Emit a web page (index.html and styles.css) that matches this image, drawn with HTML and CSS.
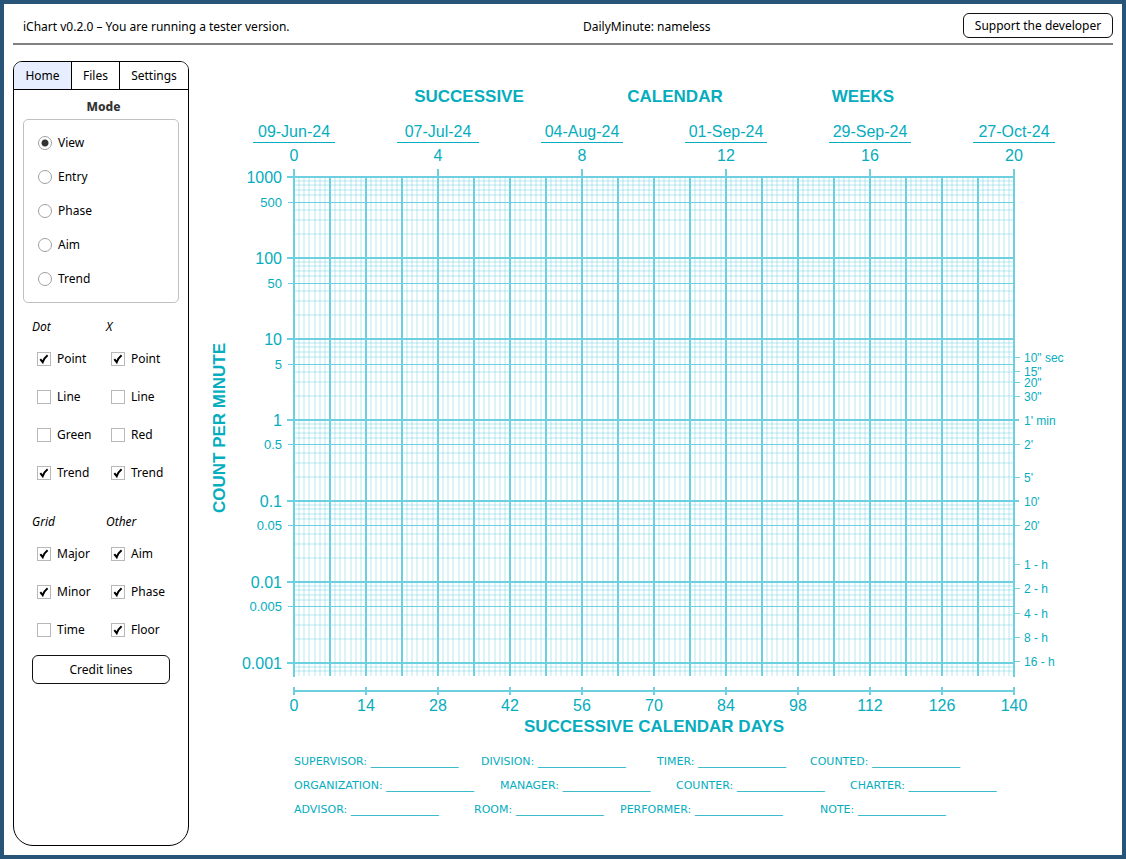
FILE: index.html
```
<!DOCTYPE html>
<html lang="en">
<head>
<meta charset="utf-8">
<title>iChart</title>
<link rel="stylesheet" href="styles.css">
</head>
<body>
<div class="app">
  <header class="topbar">
    <span class="version">iChart v0.2.0 – You are running a tester version.</span>
    <span class="chart-name">DailyMinute: nameless</span>
    <div class="topbar-end"><button type="button" class="btn btn-support">Support the developer</button></div>
  </header>
  <main class="main">
    <aside class="sidebar">
      <nav class="tabs">
        <button type="button" class="tab tab-home tab-active">Home</button>
        <button type="button" class="tab tab-files">Files</button>
        <button type="button" class="tab tab-settings">Settings</button>
      </nav>
      <div class="panel">
        <h2 class="mode-title">Mode</h2>
        <div class="modes" role="radiogroup" aria-label="Mode">
          <label class="option"><input type="radio" name="mode" checked>View</label>
          <label class="option"><input type="radio" name="mode">Entry</label>
          <label class="option"><input type="radio" name="mode">Phase</label>
          <label class="option"><input type="radio" name="mode">Aim</label>
          <label class="option"><input type="radio" name="mode">Trend</label>
        </div>
        <div class="groups">
          <section class="group">
            <h3 class="group-title">Dot</h3>
            <label class="check"><input type="checkbox" checked>Point</label>
            <label class="check"><input type="checkbox">Line</label>
            <label class="check"><input type="checkbox">Green</label>
            <label class="check"><input type="checkbox" checked>Trend</label>
          </section>
          <section class="group">
            <h3 class="group-title">X</h3>
            <label class="check"><input type="checkbox" checked>Point</label>
            <label class="check"><input type="checkbox">Line</label>
            <label class="check"><input type="checkbox">Red</label>
            <label class="check"><input type="checkbox" checked>Trend</label>
          </section>
          <section class="group">
            <h3 class="group-title">Grid</h3>
            <label class="check"><input type="checkbox" checked>Major</label>
            <label class="check"><input type="checkbox" checked>Minor</label>
            <label class="check"><input type="checkbox">Time</label>
          </section>
          <section class="group">
            <h3 class="group-title">Other</h3>
            <label class="check"><input type="checkbox" checked>Aim</label>
            <label class="check"><input type="checkbox" checked>Phase</label>
            <label class="check"><input type="checkbox" checked>Floor</label>
          </section>
        </div>
        <button type="button" class="btn btn-credit">Credit lines</button>
      </div>
    </aside>
    <svg class="chart" id="chart" viewBox="-105 -116 924 785" role="img" aria-label="Daily per minute chart"></svg>
  </main>
</div>
<script src="chart.js"></script>
</body>
</html>
```
FILE: styles.css
```
* { box-sizing: border-box; }
body {
  margin: 0;
  background: #fff;
  color: #000;
  font: 12px/16px "Noto Sans", sans-serif;
}
button, input { font: inherit; color: inherit; margin: 0; }
.app {
  min-height: 100vh;
  border: 4px solid #285577;
  padding: 9px;
  display: flex;
  flex-direction: column;
}
.topbar {
  display: grid;
  grid-template-columns: 570px 1fr auto;
  align-items: start;
  border-bottom: 2px solid #808080;
  height: 32px;
}
.version { padding: 6px 0 0 10px; }
.chart-name { padding-top: 6px; }
.btn {
  background: #fff;
  border: 1px solid #111;
  border-radius: 6px;
  padding: 0 8px;
  text-align: center;
  white-space: nowrap;
}
.btn-support { height: 25px; width: 150px; display: block; }
.main { flex: 1; display: flex; align-items: stretch; margin-top: 16px; }
.sidebar {
  flex: 0 0 176px;
  border: 1px solid #000;
  border-radius: 9px 9px 20px 20px;
  overflow: hidden;
}
.tabs { display: flex; border-bottom: 1px solid #000; }
.tab {
  height: 27px;
  border: 0;
  border-right: 1px solid #000;
  background: #fff;
  padding: 0 11px;
}
.tab-home { width: 58px; }
.tab:last-child { border-right: 0; flex: 1; padding: 0; }
.tab-active { background: #e6eeff; }
.panel { padding: 9px 9px 0; }
.mode-title { margin: 0 0 4px 5px; font-size: 12px; line-height: 16px; font-weight: 800; color: #333; text-align: center; }
.modes { border: 1px solid #c0c0c0; border-radius: 5px; padding: 6px 14px; }
.option { display: flex; align-items: center; gap: 6px; height: 34px; }
.check { display: flex; align-items: center; gap: 6px; height: 38px; padding-left: 5px; }
.groups { display: grid; grid-template-columns: 74px 1fr; row-gap: 22px; padding: 16px 0 0 9px; }
.group-title { margin: 0 0 5px; font-size: 12px; line-height: 16px; font-weight: 400; font-style: italic; }
input[type="radio"] {
  appearance: none;
  width: 14px;
  height: 14px;
  border: 1px solid #a0a0a0;
  border-radius: 50%;
  background: #fff;
}
input[type="radio"]:checked { background: radial-gradient(circle, #333 3px, #fff 4px); }
input[type="checkbox"] {
  appearance: none;
  width: 14px;
  height: 14px;
  border: 1px solid #b8b8b8;
  background: #fff;
}
input[type="checkbox"]:checked {
  background: url("data:image/svg+xml,%3Csvg xmlns='http://www.w3.org/2000/svg' viewBox='0 0 12 12'%3E%3Cpath d='M2.3 6.2L4.7 9.2Q6.2 5 9.6 2.3' fill='none' stroke='%23000' stroke-width='2'/%3E%3C/svg%3E") center / 12px 12px no-repeat;
}
.btn-credit { display: block; width: 138px; height: 29px; margin: 6px 0 0 9px; }
.chart { flex: 1; min-width: 0; height: auto; align-self: flex-start; }
.chart text { font-family: "Liberation Sans", Arial, sans-serif; fill: #05adbe; }
.chart .title { font-size: 17px; font-weight: 700; }
.chart .major-label { font-size: 16px; }
.chart .minor-label { font-size: 13px; }
.chart .time-label { font-size: 12px; }
.chart .credit { font-family: "DejaVu Sans", sans-serif; font-size: 11px; }
.chart line { stroke: #6dd0e0; }
.chart .major { stroke-width: 2; }
.chart .five { stroke-width: 1; }
.chart .minor { stroke-width: 2; stroke: #6dd0e0; stroke-opacity: .24; }
.chart .rule { stroke: #05adbe; stroke-width: 1; }
```
FILE: chart.js
```
const NS = "http://www.w3.org/2000/svg";
const chart = document.getElementById("chart");
const WIDTH = 720;
const FLOOR = 499;
const DECADE = 81;

function line(x1, y1, x2, y2, cls) {
  const el = document.createElementNS(NS, "line");
  Object.entries({ x1, y1, x2, y2, class: cls }).forEach(([k, v]) => el.setAttribute(k, v));
  chart.append(el);
}
function text(x, y, str, cls, anchor = "start", rotate = 0) {
  const el = document.createElementNS(NS, "text");
  el.setAttribute("x", x);
  el.setAttribute("y", y);
  el.setAttribute("class", cls);
  el.setAttribute("text-anchor", anchor);
  if (rotate) el.setAttribute("transform", `rotate(${rotate} ${x} ${y})`);
  el.textContent = str;
  chart.append(el);
}

// Minor grid: one line per day, and one per log step
for (let d = 1; d < 140; d++) {
  if (d % 7) line(Math.round(d * WIDTH / 140), 0, Math.round(d * WIDTH / 140), FLOOR, "minor");
}
for (let k = 0; k < 7; k++) {
  for (const n of [2, 3, 4, 6, 7, 8, 9]) {
    const y = Math.round(k * DECADE + 0.3 - DECADE * Math.log10(n / 10));
    if (y < FLOOR) line(0, y, WIDTH, y, "minor");
  }
}

// Count axis
["500", "50", "5", "0.5", "0.05", "0.005"].forEach((s, k) => {
  const y = [25, 106, 187, 267, 348, 429][k] + 0.5;
  line(-6, y, WIDTH, y, "five");
  text(-12, y + 4, s, "minor-label", "end");
});
["1000", "100", "10", "1", "0.1", "0.01", "0.001"].forEach((s, k) => {
  line(-7, k * DECADE, WIDTH, k * DECADE, "major");
  text(-12, k * DECADE + 6, s, "major-label", "end");
});

// Week lines and the dates above them
for (let w = 0; w <= 20; w++) {
  const edge = w === 0 || w === 20;
  line(w * 36, w % 4 ? 0 : -8, w * 36, edge ? FLOOR + 1 : FLOOR, "major");
}
["09-Jun-24", "07-Jul-24", "04-Aug-24", "01-Sep-24", "29-Sep-24", "27-Oct-24"].forEach((s, i) => {
  text(i * 144, -40, s, "major-label", "middle");
  line(i * 144 - 41, -34.5, i * 144 + 41, -34.5, "rule");
  text(i * 144, -16, String(i * 4), "major-label", "middle");
});

// Day axis
line(0, 514, WIDTH, 514, "major");
for (let i = 0; i <= 10; i++) {
  line(i * 72, 510, i * 72, 518, "major");
  text(i * 72, 534, String(i * 14), "major-label", "middle");
}

// Counting time axis
[
  ["10\" sec", 180], ["15\"", 194], ["20\"", 205], ["30\"", 219], ["1' min", 243, true],
  ["2'", 267], ["5'", 300], ["10'", 324, true], ["20'", 348], ["1 - h", 387],
  ["2 - h", 411], ["4 - h", 436], ["8 - h", 460], ["16 - h", 484]
].forEach(([s, y, major]) => {
  if (major) line(720, y, 725, y, "major");
  else line(721, y + 0.5, 726, y + 0.5, "five");
  text(730, y + 5, s, "time-label");
});

text(175, -75, "SUCCESSIVE", "title", "middle");
text(381, -75, "CALENDAR", "title", "middle");
text(569, -75, "WEEKS", "title", "middle");
text(360, 555, "SUCCESSIVE CALENDAR DAYS", "title", "middle");
text(-69, 251, "COUNT PER MINUTE", "title", "middle", -90);

// Credit lines
const blank = " ________________";
[
  [["SUPERVISOR:", 0], ["DIVISION:", 187], ["TIMER:", 363], ["COUNTED:", 516]],
  [["ORGANIZATION:", 0], ["MANAGER:", 206], ["COUNTER:", 382], ["CHARTER:", 556]],
  [["ADVISOR:", 0], ["ROOM:", 180], ["PERFORMER:", 326], ["NOTE:", 526]]
].forEach((row, r) => row.forEach(([s, x]) => text(x, 588 + r * 24, s + blank, "credit")));
```
